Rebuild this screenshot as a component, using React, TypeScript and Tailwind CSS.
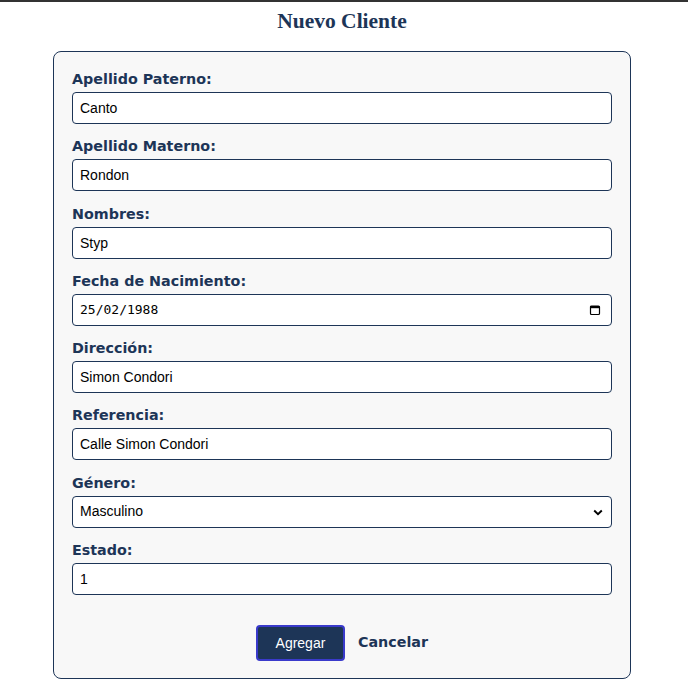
import { useState } from 'react'

const fieldLabel =
  "block text-[14.3px] leading-[17px] font-bold text-[#1d3557] mb-[4px] [font-family:'DejaVu_Sans',Verdana,sans-serif]"
const fieldInput =
  "block w-full h-[32px] rounded-[4px] border border-[#1d3557] bg-white px-[7px] text-[14px] text-black outline-none [font-family:'Liberation_Sans',Arial,sans-serif]"

function CalendarIcon() {
  return (
    <svg width="12" height="12" viewBox="0 0 12 12" className="text-black">
      <rect x="1.5" y="2" width="9" height="8.5" rx="1" fill="none" stroke="currentColor" strokeWidth="1.2" />
      <rect x="1.5" y="2" width="9" height="2.2" fill="currentColor" />
    </svg>
  )
}

export default function App() {
  const [form, setForm] = useState({
    paterno: 'Canto',
    materno: 'Rondon',
    nombres: 'Styp',
    fecha: '25/02/1988',
    direccion: 'Simon Condori',
    referencia: 'Calle Simon Condori',
    genero: 'Masculino',
    estado: '1'
  })

  const set = (key: keyof typeof form) => (e: any) =>
    setForm({ ...form, [key]: e.target.value })

  return (
    <div className="min-h-[698px] bg-white border-t-2 border-[#333333]">
      <div className="w-[684px]">
        <h2 className="pt-[5px] text-center text-[21.5px] leading-[28px] font-bold text-[#1d3557] [font-family:'Liberation_Serif','Times_New_Roman',serif]">
          Nuevo Cliente
        </h2>

        <form
          onSubmit={(e) => e.preventDefault()}
          className="mx-auto mt-[16px] w-[578px] rounded-[8px] border border-[#1d3557] bg-[#f8f8f8] px-[18px] pt-[19px] pb-[17px]"
        >
          <div className="flex flex-col gap-[14.3px]">
            <div>
              <label className={fieldLabel}>Apellido Paterno:</label>
              <input className={fieldInput} value={form.paterno} onChange={set('paterno')} />
            </div>
            <div>
              <label className={fieldLabel}>Apellido Materno:</label>
              <input className={fieldInput} value={form.materno} onChange={set('materno')} />
            </div>
            <div>
              <label className={fieldLabel}>Nombres:</label>
              <input className={fieldInput} value={form.nombres} onChange={set('nombres')} />
            </div>
            <div>
              <label className={fieldLabel}>Fecha de Nacimiento:</label>
              <div className="relative">
                <input
                  className="block w-full h-[32px] rounded-[4px] border border-[#1d3557] bg-white px-[7px] text-[13px] text-black outline-none [font-family:'DejaVu_Sans_Mono','Liberation_Mono',monospace]"
                  value={form.fecha}
                  onChange={set('fecha')}
                />
                <span className="absolute right-[11px] top-[10px] flex">
                  <CalendarIcon />
                </span>
              </div>
            </div>
            <div>
              <label className={fieldLabel}>Dirección:</label>
              <input className={fieldInput} value={form.direccion} onChange={set('direccion')} />
            </div>
            <div>
              <label className={fieldLabel}>Referencia:</label>
              <input className={fieldInput} value={form.referencia} onChange={set('referencia')} />
            </div>
            <div>
              <label className={fieldLabel}>Género:</label>
              <div className="relative">
                <select
                  className={fieldInput + ' appearance-none pr-[24px]'}
                  value={form.genero}
                  onChange={set('genero')}
                >
                  <option>Masculino</option>
                  <option>Femenino</option>
                </select>
                <svg
                  width="10"
                  height="7"
                  viewBox="0 0 10 7"
                  className="pointer-events-none absolute right-[9px] top-[13px]"
                >
                  <path d="M1.2 1.5 L5 5.2 L8.8 1.5" fill="none" stroke="#000" strokeWidth="1.9" />
                </svg>
              </div>
            </div>
            <div>
              <label className={fieldLabel}>Estado:</label>
              <input className={fieldInput} value={form.estado} onChange={set('estado')} />
            </div>
          </div>

          <div className="mt-[30px] flex items-center justify-center gap-[13px]">
            <button
              type="submit"
              className="h-[36px] w-[89px] rounded-[4px] border-2 border-[#3a3acb] bg-[#1d3557] text-[14px] text-white [font-family:'Liberation_Sans',Arial,sans-serif]"
            >
              Agregar
            </button>
            <button
              type="button"
              className="text-[14.3px] font-bold text-[#1d3557] [font-family:'DejaVu_Sans',Verdana,sans-serif]"
            >
              Cancelar
            </button>
          </div>
        </form>
      </div>
    </div>
  )
}
